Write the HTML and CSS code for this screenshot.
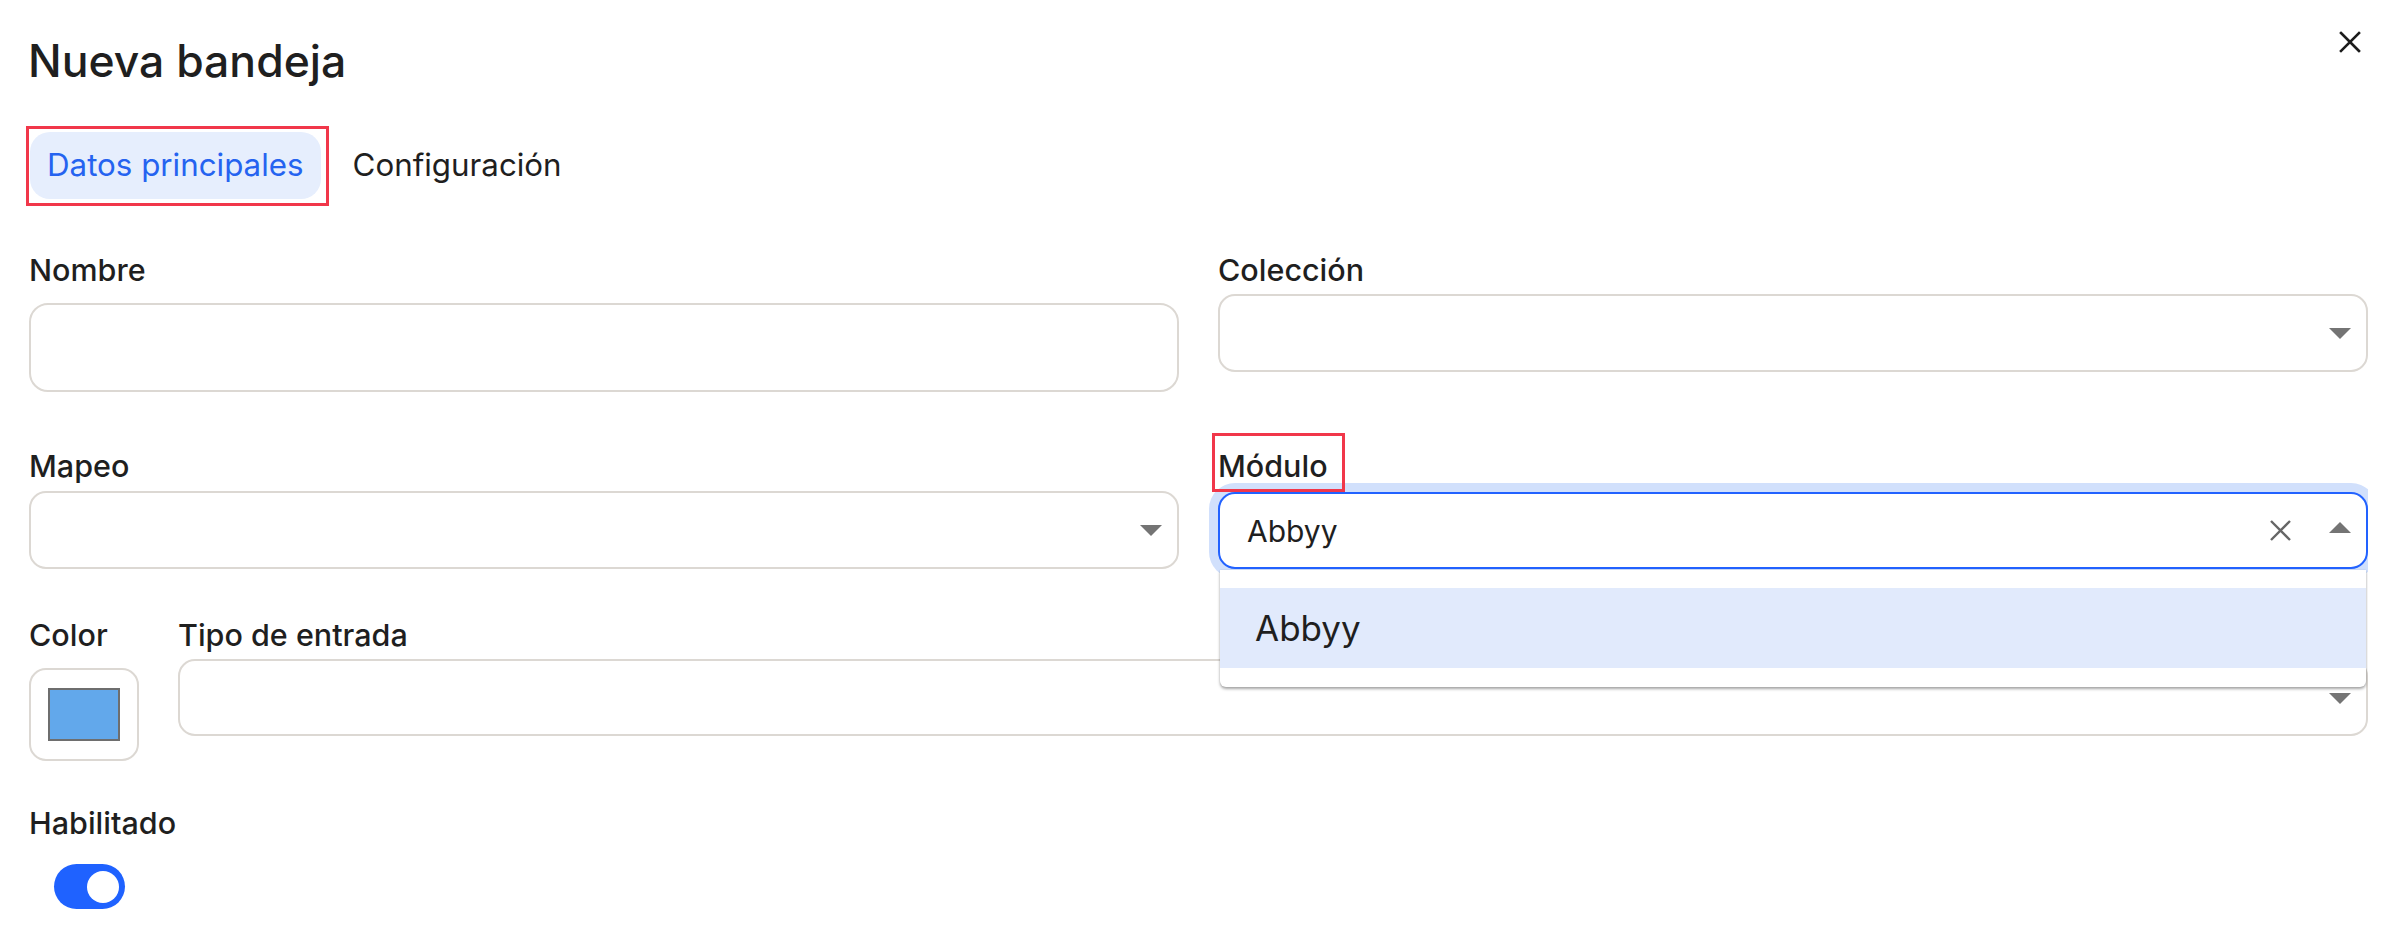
FILE: index.html
```html
<!DOCTYPE html>
<html lang="es">
<head>
<meta charset="utf-8">
<title>Nueva bandeja</title>
<link rel="stylesheet" href="styles.css">
</head>
<body>
<div class="dialog">
  <div class="header">
    <h1 class="title">Nueva bandeja</h1>
    <button class="close" aria-label="Cerrar">
      <svg width="22" height="22" viewBox="0 0 22 22"><path d="M2 2 L20 20 M20 2 L2 20" stroke="#1c1c1c" stroke-width="2.6" stroke-linecap="square" fill="none"/></svg>
    </button>
  </div>

  <div class="tabs">
    <div class="mark-box">
      <div class="tab active">Datos principales</div>
    </div>
    <div class="tab">Configuración</div>
  </div>

  <div class="form">
    <div class="row row1">
      <div class="field">
        <div class="label">Nombre</div>
        <div class="input text-input"></div>
      </div>
      <div class="field">
        <div class="label">Colección</div>
        <div class="input select"><span class="arrow down"></span></div>
      </div>
    </div>

    <div class="row row2">
      <div class="field">
        <div class="label">Mapeo</div>
        <div class="input select mapeo"><span class="arrow down"></span></div>
      </div>
      <div class="field">
        <div class="label"><span class="marked">Módulo</span></div>
        <div class="select-wrap">
          <div class="input select focused">
            <span class="value">Abbyy</span>
            <svg class="clear" width="25" height="25" viewBox="0 0 25 25"><path d="M3 3 L22 22 M22 3 L3 22" stroke="#666" stroke-width="2.4" fill="none"/></svg>
            <span class="arrow up"></span>
          </div>
          <div class="menu">
            <div class="option">Abbyy</div>
          </div>
        </div>
      </div>
    </div>

    <div class="row row3">
      <div class="field color-field">
        <div class="label">Color</div>
        <div class="color-box"><span class="swatch"></span></div>
      </div>
      <div class="field">
        <div class="label">Tipo de entrada</div>
        <div class="input select tipo"><span class="arrow down"></span></div>
      </div>
    </div>

    <div class="enabled">
      <div class="label">Habilitado</div>
      <div class="toggle"><span class="knob"></span></div>
    </div>
  </div>
</div>
</body>
</html>
```

FILE: styles.css
```css
*, *::before, *::after { box-sizing: border-box; }

html, body {
  margin: 0;
  padding: 0;
  background: #ffffff;
}

body {
  font-family: Inter, "Noto Sans", "Liberation Sans", sans-serif;
  color: #1f1f1f;
  width: 2390px;
  height: 936px;
  overflow: hidden;
}

.dialog {
  width: 2390px;
}

.header {
  display: flex;
  justify-content: space-between;
  align-items: flex-start;
  padding: 33px 29px 0 28px;
}

.title {
  margin: 0;
  font-size: 44.5px;
  line-height: 56px;
  font-weight: 500;
  letter-spacing: 0;
  color: #1f1f1f;
}

.close {
  margin-top: -2px;
  padding: 0;
  border: 0;
  background: transparent;
  width: 22px;
  height: 22px;
  display: block;
}

.close svg { display: block; }

.tabs {
  display: flex;
  align-items: flex-start;
  margin-top: 37px;
  padding-left: 26px;
}

.mark-box {
  border: 3px solid #f1374a;
  padding: 3px 5px 4px 1px;
}

.tab {
  font-size: 31.3px;
  line-height: 36px;
  font-weight: 400;
  padding: 15px 17px 16px 17px;
  border-radius: 20px;
  color: #1f1f1f;
  white-space: nowrap;
}

.tab.active {
  background: #e6eefd;
  color: #2563f0;
}

.tabs > .tab {
  margin-left: 7px;
  margin-top: 6px;
}

.form {
  margin-top: 46px;
  margin-right: 22px;
  padding-left: 29px;
  padding-top: 0;
  overflow: hidden;
  height: 700px;
}

.row {
  display: flex;
  gap: 39px;
}

.row1 .field { flex: 1; }
.row2 { margin-top: 56px; }
.row2 .field { flex: 1; }
.row3 { margin-top: 48px; }
.row3 .field { flex: 1; }
.row3 .color-field { flex: 0 0 110px; }

.field {
  position: relative;
}

.label {
  font-size: 30.5px;
  line-height: 36px;
  font-weight: 500;
  color: #1f1f1f;
  white-space: nowrap;
}

.marked {
  position: relative;
  z-index: 3;
}

.marked::after {
  content: "";
  position: absolute;
  left: -6px;
  top: -14px;
  width: 133px;
  height: 59px;
  border: 3px solid #f1374a;
}

.input {
  position: relative;
  border: 2px solid #dcd8d3;
  border-radius: 17px;
  background: #ffffff;
}

.text-input {
  margin-top: 15px;
  height: 89px;
  border-radius: 19px;
}

.select {
  margin-top: 6px;
  height: 78px;
  display: flex;
  align-items: center;
}

.select.mapeo { margin-top: 7px; }

.arrow {
  position: absolute;
  right: 15px;
  top: 50%;
  width: 0;
  height: 0;
  border-left: 11px solid transparent;
  border-right: 11px solid transparent;
}

.arrow.down {
  border-top: 11px solid #747474;
  margin-top: -5px;
}

.arrow.up {
  border-bottom: 11px solid #747474;
  margin-top: -9px;
}

.select-wrap {
  position: relative;
  margin-top: 8px;
}

.select.focused {
  margin-top: 0;
  height: 77px;
  border: 2px solid #2262ff;
  box-shadow: 0 0 0 9px #d1e0fc;
  padding-left: 27px;
}

.value {
  font-size: 30px;
  line-height: 36px;
  font-weight: 400;
  color: #1f1f1f;
}

.clear {
  position: absolute;
  right: 73px;
  top: 24px;
  display: block;
}

.menu {
  position: absolute;
  left: 2px;
  right: 2px;
  top: 78px;
  background: #ffffff;
  border-radius: 0 0 6px 6px;
  box-shadow: 0 2px 3px rgba(0, 0, 0, 0.35), 0 0 2px rgba(0, 0, 0, 0.08);
  padding: 18px 0 19px 0;
  z-index: 5;
}

.option {
  height: 80px;
  background: #e1eafc;
  font-size: 35px;
  line-height: 42px;
  padding: 19px 0 0 35px;
  color: #1f1f1f;
}

.color-box {
  margin-top: 15px;
  width: 110px;
  height: 93px;
  border: 2px solid #dcd8d3;
  border-radius: 17px;
  display: flex;
  align-items: center;
  justify-content: center;
}

.swatch {
  display: block;
  width: 72px;
  height: 53px;
  background: #62a8eb;
  border: 2px solid #6e6e6e;
}

.select.tipo {
  margin-top: 6px;
  height: 77px;
}

.enabled {
  margin-top: 44px;
}

.toggle {
  margin-top: 23px;
  margin-left: 25px;
  width: 71px;
  height: 45px;
  border-radius: 23px;
  background: #1f62ff;
  position: relative;
}

.knob {
  position: absolute;
  right: 6px;
  top: 7px;
  width: 32px;
  height: 32px;
  border-radius: 50%;
  background: #ffffff;
}
```
